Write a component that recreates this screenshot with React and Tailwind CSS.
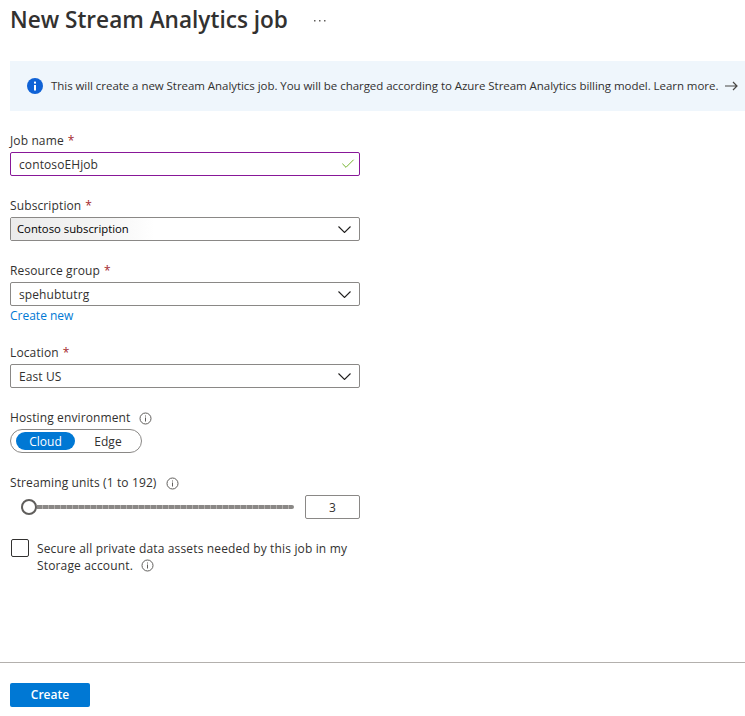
import { Check } from "lucide-react";

const FONT = "font-['Open_Sans','Noto_Sans',sans-serif]";

const InfoDot = ({ className = "" }) => (
  <svg width="13" height="13" viewBox="0 0 13 13" className={className}>
    <circle cx="6.5" cy="6.5" r="5.5" fill="none" stroke="#605e5c" strokeWidth="1" />
    <rect x="6" y="5.5" width="1" height="4" fill="#605e5c" />
    <rect x="6" y="3.5" width="1" height="1" fill="#605e5c" />
  </svg>
);

const Chevron = () => (
  <svg width="13" height="7" viewBox="0 0 13 7" className="shrink-0">
    <path d="M0.5 0.5 L6.5 6.5 L12.5 0.5" fill="none" stroke="#201f1e" strokeWidth="1.1" />
  </svg>
);

const Label = ({ text, required, info, infoClass = "ml-[9px]" }) => (
  <div className="flex h-[18px] items-center pt-[2px] text-[12px] leading-[16px] tracking-[0.12px] text-[#323130]">
    <span>{text}</span>
    {required && <span className="ml-1 text-[#a4262c]">*</span>}
    {info && <InfoDot className={infoClass} />}
  </div>
);

const Dropdown = ({ value }) => (
  <div className="mt-[3px] flex h-6 items-center justify-between rounded-[2px] border border-[#8a8886] pl-2 pr-2 text-[12px] tracking-[0.1px] text-[#323130]">
    <span className="pt-[2px]">{value}</span>
    <Chevron />
  </div>
);

export default function App() {
  return (
    <div className={`${FONT} flex h-[716px] w-[745px] flex-col overflow-hidden bg-white`}>
      <div className="flex h-[61px] items-start pl-[10px]">
        <h1 className="mt-[3px] text-[22.6px] leading-[34px] font-semibold text-[#323130]">New Stream Analytics job</h1>
        <svg width="12" height="3" viewBox="0 0 12 3" className="ml-[26px] mt-[19px]">
          <rect x="0" y="1" width="1.5" height="1.5" fill="#605e5c" />
          <rect x="5" y="1" width="1.5" height="1.5" fill="#605e5c" />
          <rect x="10" y="1" width="1.5" height="1.5" fill="#605e5c" />
        </svg>
      </div>

      <div className="ml-[10px] flex h-[50px] items-center bg-[#eff6fc] pl-[17px] pr-[7px] text-[#323130]">
        <svg width="16" height="16" viewBox="0 0 16 16" className="shrink-0">
          <circle cx="8" cy="8" r="8" fill="#0f62d6" />
          <rect x="7" y="7" width="2" height="5.5" fill="#fff" />
          <rect x="7" y="3.6" width="2" height="2" fill="#fff" />
        </svg>
        <span className="ml-2 whitespace-nowrap text-[11.5px] tracking-[-0.05px]">
          This will create a new Stream Analytics job. You will be charged according to Azure Stream Analytics billing model. Learn more.
        </span>
        <svg width="13" height="10" viewBox="0 0 13 10" className="ml-auto shrink-0">
          <path d="M0 5 H12 M8 1 L12 5 L8 9" fill="none" stroke="#484644" strokeWidth="1.2" />
        </svg>
      </div>

      <div className="ml-[10px] flex w-[350px] flex-col pt-5">
        <Label text="Job name" required />
        <div className="mt-[3px] flex h-6 items-center justify-between rounded-[2px] border border-[#881798] pl-2 pr-[3px] text-[12px] tracking-[0.1px] text-[#323130]">
          <span className="pt-[2px]">contosoEHjob</span>
          <Check size={16} strokeWidth={1.25} className="text-[#57a300]" />
        </div>

        <div className="mt-5">
          <Label text="Subscription" required />
          <div className="mt-[3px] flex h-6 items-center justify-between rounded-[2px] border border-[#8a8886] pr-2 text-[12px] text-[#201f1e]">
            <span className="flex h-[22px] w-[143px] items-center bg-gradient-to-r from-[#ebebeb] via-[#f6f6f6] via-70% to-white pl-[6px] pt-[1px] text-[11.3px] text-black">
              Contoso subscription
            </span>
            <Chevron />
          </div>
        </div>

        <div className="mt-5">
          <Label text="Resource group" required />
          <Dropdown value="spehubtutrg" />
          <a className="block h-[18px] pt-[1px] text-[12px] leading-[18px] text-[#0078d4]">Create new</a>
        </div>

        <div className="mt-[19px]">
          <Label text="Location" required />
          <Dropdown value="East US" />
        </div>

        <div className="mt-5">
          <Label text="Hosting environment" info />
          <div className="mt-[3px] flex h-6 w-[132px] items-center rounded-full border border-[#8a8886] pl-[5px] text-[12px]">
            <span className="flex h-[18px] w-[59px] items-center justify-center rounded-full bg-[#0078d4] pt-[1px] text-white">Cloud</span>
            <span className="flex w-[66px] justify-center pt-[1px] text-[#323130]">Edge</span>
          </div>
        </div>

        <div className="mt-5">
          <Label text="Streaming units (1 to 192)" info infoClass="ml-[9px]" />
          <div className="mt-1 flex h-6 items-center">
            <span className="ml-[11px] h-4 w-4 shrink-0 rounded-full border-2 border-[#605e5c] bg-white" />
            <span className="h-1 w-[257px] rounded-r-sm bg-[repeating-linear-gradient(90deg,#8a8886_0,#8a8886_5px,#b3b0ad_5px,#b3b0ad_6px)]" />
            <span className="ml-auto flex h-6 w-[55px] items-center justify-center rounded-[2px] border border-[#8a8886] pt-[1px] text-[12px] text-[#323130]">3</span>
          </div>
        </div>

        <div className="mt-5 flex items-start">
          <span className="ml-px h-[18px] w-[18px] shrink-0 rounded-[2px] border border-[#323130]" />
          <div className="ml-2 text-[12px] leading-[17px] tracking-[0.15px] text-[#323130]">
            <div className="pt-[1px]">Secure all private data assets needed by this job in my</div>
            <div className="flex items-center">Storage account.<InfoDot className="ml-2" /></div>
          </div>
        </div>
      </div>

      <div className="mt-auto flex h-[54px] flex-col border-t border-[#b3b0ad] pl-[10px] pt-5">
        <button className="flex h-6 w-20 items-center justify-center rounded-[2px] bg-[#0078d4] text-[12px] font-semibold text-white">Create</button>
      </div>
    </div>
  );
}
